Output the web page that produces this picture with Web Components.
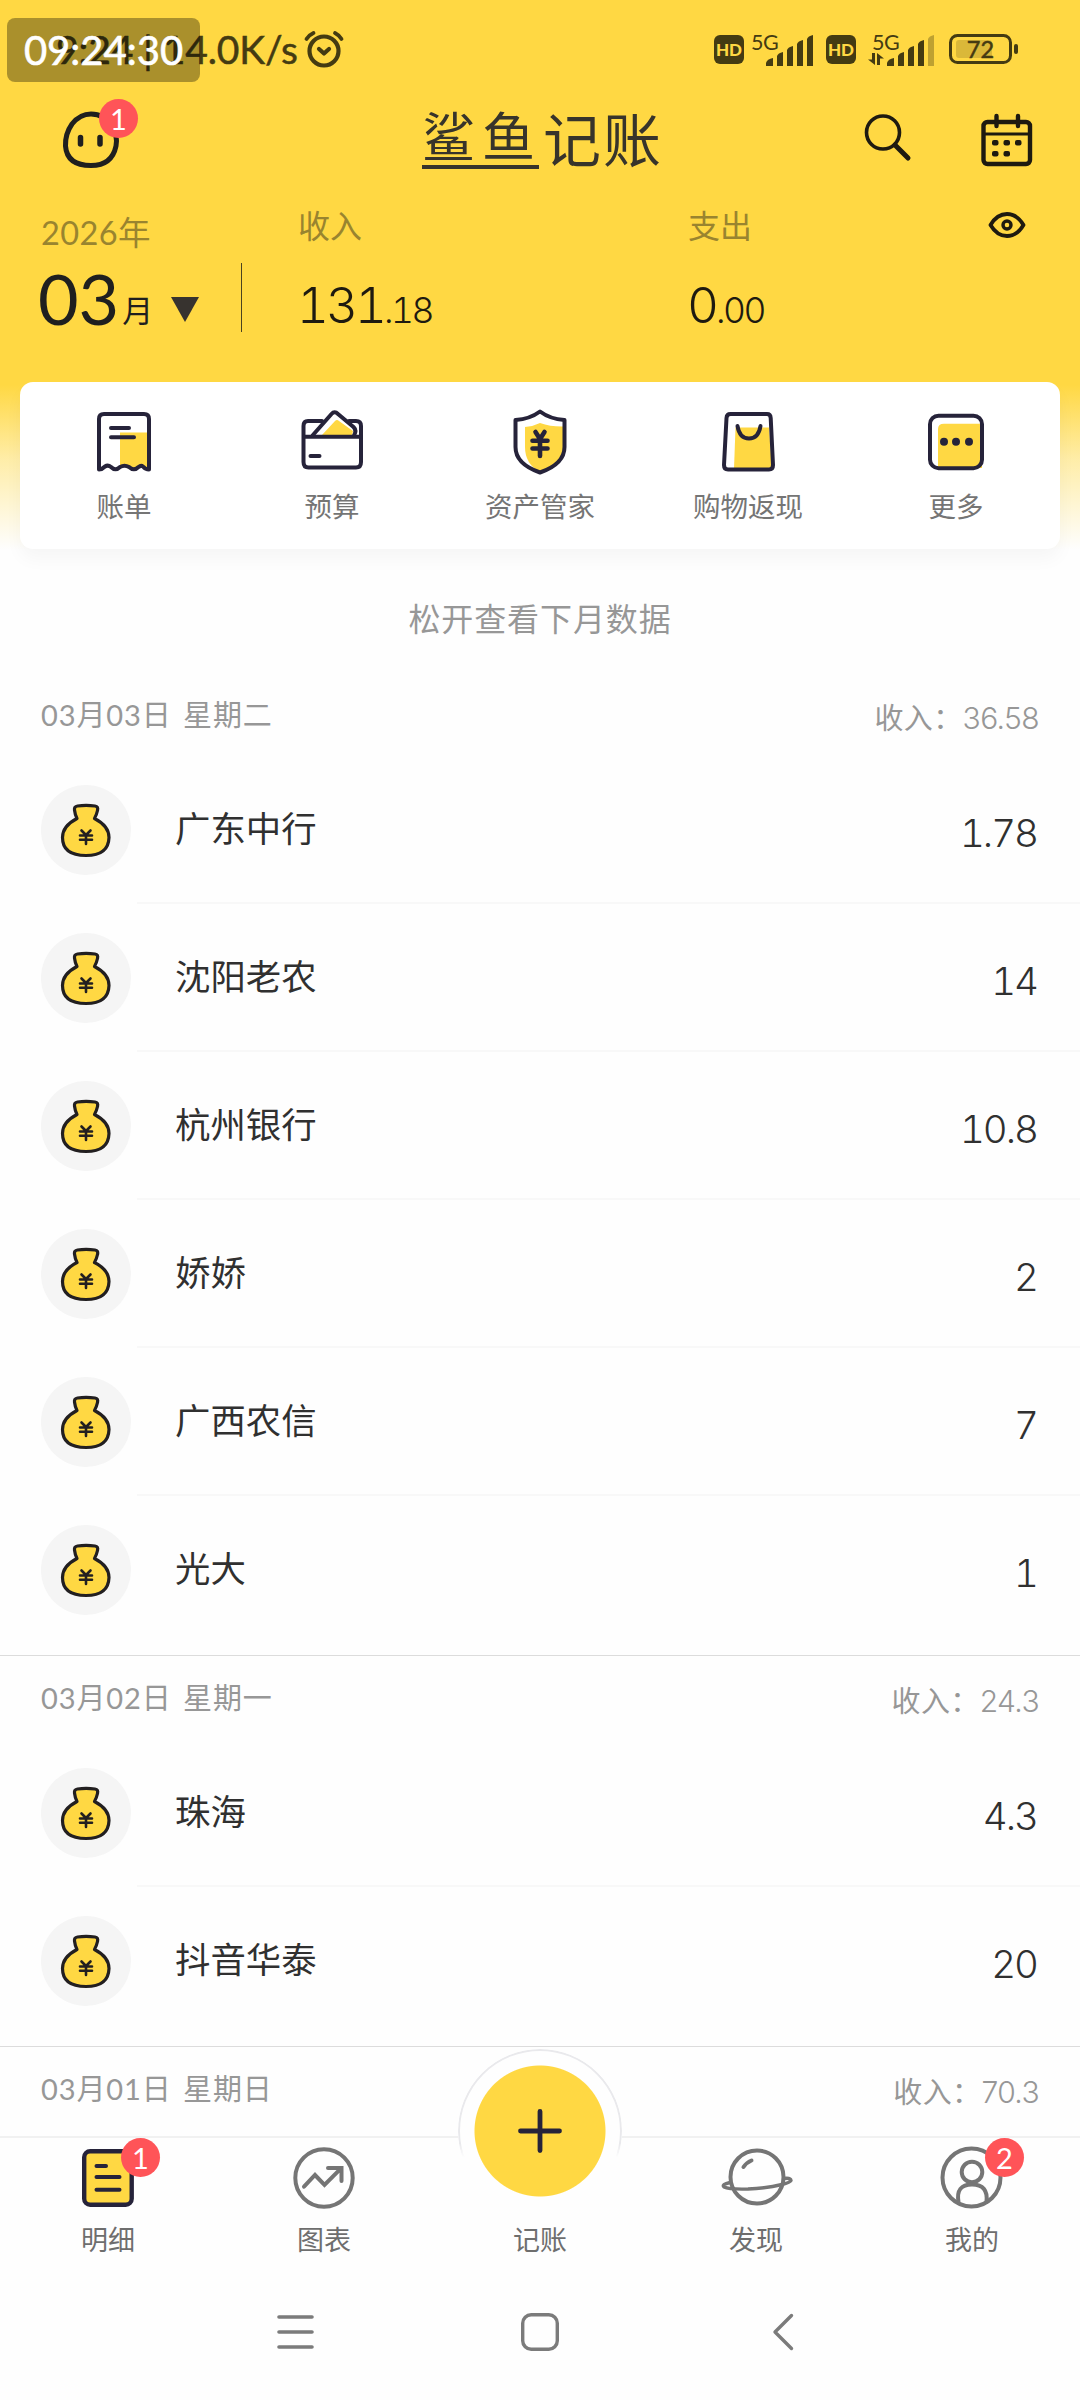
<!DOCTYPE html>
<html lang="zh-CN">
<head>
<meta charset="utf-8">
<title>鲨鱼记账</title>
<style>
html,body{margin:0;padding:0;background:#fefefe}
body{width:1080px;height:2400px;overflow:hidden;font-family:Lato,"Noto Sans CJK SC",sans-serif;color:#222}
</style>
</head>
<body>
<ledger-app></ledger-app>
<script>
const define = (name, css, html) => {
  customElements.define(name, class extends HTMLElement {
    constructor() {
      super();
      const t = document.createElement('template');
      t.innerHTML = '<style>*{box-sizing:border-box}' + css + '</style>' + (typeof html === 'function' ? html(this) : html);
      this.attachShadow({mode: 'open'}).appendChild(t.content.cloneNode(true));
    }
  });
};

const ink = 'fill="none" stroke="#26233a" stroke-width="4" stroke-linecap="round" stroke-linejoin="round"';
const gray = 'fill="none" stroke="#757575" stroke-width="4" stroke-linecap="round" stroke-linejoin="round"';
const dark = 'fill="none" stroke="#1e1a10" stroke-width="4.4" stroke-linecap="round" stroke-linejoin="round"';
const signal = last => '<g fill="#443b12"><path d="M0 31V28Q1 24 7 23V31z"/><path d="M11 31V21Q12 18 17 17V31z"/><path d="M21 31V15Q22 12 27 11V31z"/><path d="M31 31V9Q32 6 37 5V31z"/><path opacity="' + last + '" d="M41 31V4Q42 1 47 0V31z"/></g>';
const ICONS = {
  alarm: [40, 36, '<g fill="none" stroke="#443b12" stroke-width="4.200" stroke-linecap="round"><circle cx="20" cy="20" r="14.5"/><path d="M2.5 8Q5 4 9.500 2M31 2Q35 4 37.500 8" stroke-width="3.800"/><path d="M15 18L20 22.500L25 18" stroke-linejoin="round"/></g>'],
  signal: [48, 31, signal(1)],
  signalWeak: [48, 31, signal(.35)],
  updown: [16, 12, '<g fill="#443b12"><path d="M4 0H7V12L0 6.500H4z"/><path d="M9 12H12V5.500H16L9 0z"/></g>'],
  battery: [70, 30, '<rect x="1.500" y="1.500" width="60" height="27" rx="7" fill="none" stroke="#443b12" stroke-width="3"/><rect x="7" y="6" width="36" height="18" rx="3" fill="#443b12" opacity=".2"/><rect x="65" y="10" width="4" height="10" rx="2" fill="#443b12"/>'],
  face: [58, 58, '<g fill="none" stroke="#1f1f1f"><path d="M29 3Q42 3 50 15Q56 25 54 35Q50 54.500 29 54.500Q5 54.500 3.500 35Q3 23 10 13Q18 3 29 3z" stroke-width="5"/><path d="M18.500 26.500V33M38 26.500V33" stroke-width="5.500" stroke-linecap="round"/></g>'],
  search: [48, 48, '<g ' + dark + '><circle cx="19" cy="18.500" r="16.500" stroke-width="3.600"/><path d="M31 31L44 44" stroke-width="5"/></g>'],
  calendar: [52, 52, '<g ' + dark + '><rect x="2.500" y="8" width="46.500" height="42" rx="4"/><path d="M3 20H49" stroke-width="3"/><path d="M15.500 2V12M37 2V12"/></g><g fill="#1e1a10"><rect x="11" y="26" width="6.500" height="5.500" rx="2"/><rect x="22.500" y="26" width="6.500" height="5.500" rx="2"/><rect x="34" y="26" width="6.500" height="5.500" rx="2"/><rect x="11" y="37" width="6.500" height="5.500" rx="2"/><rect x="22.500" y="37" width="6.500" height="5.500" rx="2"/></g>'],
  eye: [38, 28, '<g fill="none" stroke="#1e1a10" stroke-linejoin="round"><path d="M2.500 14Q9 3 19 3T35.500 14Q29 25 19 25T2.500 14z" stroke-width="3.800"/><circle cx="19" cy="14" r="4" stroke-width="3.400"/></g>'],
  receipt: [64, 64, '<path d="M28 23.500H57V60L50 57L42 60L34 57L28 58z" fill="#ffd843"/><g ' + ink + '><path d="M7 60.500V10Q7 5 12 5H52Q57 5 57 10V60.500Q53.500 60.500 51 57.500Q49 56 46.500 58Q42 62.500 37 58Q32.500 55.500 28 58Q23.500 62.500 19 58Q16 55.500 13 57.500Q10 60.500 7 60.500z"/><path d="M19 19H37M19 28.300H42"/></g>'],
  wallet: [64, 64, '<path d="M22 26L35 12Q37 10 39 12L53 22L52 26z" fill="#ffd843"/><g ' + ink + '><path d="M22 12H8Q3.500 12 3.500 17V53Q3.500 58.500 8.500 58.500H56Q61 58.500 61 53V17Q61 12 56 12H49"/><path d="M4 27.700H61M10.500 47H19.500"/><path d="M12.500 26.500L31.500 5Q34.500 1.500 38 5L53.500 18Q57 21.500 54 26.500"/></g>'],
  shield: [64, 64, '<path d="M17 18Q25 17.500 32 14Q43 18 57 17.500V38Q56 56 32 63Q17 55 17 38z" fill="#ffd843"/><g ' + ink + '><path d="M7.500 11Q22 10 32 2.500Q42 10 56.500 11V38Q56.500 55 32 63.500Q7.500 55 7.500 38z"/><path d="M27.500 23L32 30L36.500 23M24.500 31.700H39.500M24.500 39.500H39.500M32 31V47" stroke-width="4.600"/></g>'],
  shop: [64, 64, '<path d="M19.500 18.500H53L56 60H18z" fill="#ffd843"/><g ' + ink + '><path d="M14.500 5H51Q54.500 5 54.700 9L57 56Q57 60.500 53 60.500H12Q8 60.500 8 56L10.500 9Q10.700 5 14.500 5z"/><path d="M21.500 17Q23.500 29.500 33 29.500T44.500 17"/></g>'],
  more: [64, 64, '<path d="M14 60V20Q14 14.700 20 14.700H58V59z" fill="#ffd843"/><rect x="6" y="6.700" width="52" height="52.500" rx="8.500" ' + ink + '/><g fill="#26233a"><circle cx="20" cy="32.700" r="4"/><circle cx="32" cy="32.700" r="4"/><circle cx="45" cy="32.700" r="4"/></g>'],
  money: [90, 90, '<g stroke="#221f20" stroke-linejoin="round" stroke-linecap="round"><path d="M33.500 25Q33 21.500 36.500 21Q45 19.600 54 21Q57.500 21.500 56.500 25.500Q55.500 30 53.500 33.500Q68 41 68 52.500Q67.500 70.500 45 70.500Q21.500 70.500 21.500 52.500Q21.500 41 36 33.500Q34 29.500 33.500 25z" fill="#ffd843" stroke-width="3.200"/><path d="M40.500 45.500L45 50L49.500 45.500M39 50.500H51M39 54.800H51M45 50V59" fill="none" stroke-width="2.600"/></g>'],
  bills: [64, 64, '<rect x="8.200" y="5.200" width="47.500" height="53.500" rx="6" fill="#ffd843" stroke="#26233a" stroke-width="4.400"/><path d="M20.500 20H30M20.500 31H43.500M20.500 43.700H43.500" ' + ink + '/>'],
  chart: [64, 64, '<g ' + gray + '><circle cx="32" cy="32" r="28.700"/><path d="M12 40.700L23 29L32.500 39L49 22.300M36 22H49.500V35" stroke-linejoin="miter"/></g>'],
  planet: [64, 64, '<g ' + gray + '><circle cx="33" cy="31" r="26.500"/><path d="M19.500 21Q22.500 16.500 27.500 14.500"/><path d="M6 36.500Q-3 38.500 0 41Q5 43.500 24 43Q44 42 58 38.500Q66 36.500 67 34.500Q66.500 31.500 60 32.500" stroke-width="3.400"/></g>'],
  user: [64, 64, '<g ' + gray + '><circle cx="31.500" cy="31.500" r="29"/><circle cx="32" cy="26" r="10.300"/><path d="M18.500 56Q15.500 38.500 32 38.500T46.500 56"/></g>'],
  plus: [44, 44, '<path d="M22 2.500V41.500M2.500 22H41.500" fill="none" stroke="#26233a" stroke-width="4.800" stroke-linecap="round"/>'],
  menu: [40, 40, '<path d="M4 5H37M4 20H37M4 35H37" fill="none" stroke="#7b7b7b" stroke-width="3.600" stroke-linecap="round"/>'],
  home: [40, 40, '<rect x="2.700" y="2.700" width="34.600" height="34.600" rx="8.500" fill="none" stroke="#7b7b7b" stroke-width="3.400"/>'],
  back: [40, 40, '<path d="M26.500 3.500L10 20L26.500 36.500" fill="none" stroke="#7b7b7b" stroke-width="3.400" stroke-linecap="round" stroke-linejoin="round"/>']
};
define('ui-icon', ':host{display:block;flex:none}svg{display:block;overflow:visible}', el => {
  const [w, h, body] = ICONS[el.getAttribute('name')];
  return `<svg width="${w}" height="${h}" viewBox="0 0 ${w} ${h}">${body}</svg>`;
});

define('count-badge', ':host{position:absolute;width:39px;height:39px;border-radius:50%;background:#ff5458;color:#fff;font-size:29px;line-height:39px;text-align:center}', '<slot></slot>');

define('status-bar', `
:host{display:flex;position:relative;height:96px;padding:2px 61px 0 56px;align-items:center;justify-content:space-between;color:#443b12}
.l,.r{display:flex;align-items:center}
.t{font-size:39px;line-height:60px;white-space:pre;width:243px;letter-spacing:-.1px;-webkit-text-stroke:.5px #443b12}
.hd{width:30px;height:29px;border-radius:6px;background:#443b12;color:#ffd843;font:900 17px/29px Lato,sans-serif;text-align:center}
.net{position:relative;height:34px;display:flex;align-items:flex-end}
.g{font-size:21.500px;line-height:20px;letter-spacing:-.5px}
.n1{width:70px;margin-left:7px}.n2{width:68px;margin-left:12px}
.n1 .g{align-self:flex-start;width:15px}.n2 .g{position:absolute;left:4px;top:0}
.n1,.n2{margin-top:-1px}
.n2 .u{margin-right:3px;margin-bottom:1px}
.b{position:relative;margin-left:13px}
.b span{position:absolute;left:0;top:0;width:63px;text-align:center;font-size:23.500px;line-height:30px;-webkit-text-stroke:.5px #443b12}
.clock{position:absolute;left:7px;top:18px;width:193px;height:64px;border-radius:8px;background:rgba(0,0,0,.335);color:#fff;font-size:40px;line-height:65px;text-align:center;-webkit-text-stroke:.6px #fff}`,
`<div class="l"><span class="t">9:24 | 14.0K/s</span><ui-icon name="alarm" style="margin-left:5px"></ui-icon></div>
<div class="r"><span class="hd">HD</span>
<div class="net n1"><span class="g">5G</span><ui-icon name="signal"></ui-icon></div>
<span class="hd" style="margin-left:5px">HD</span>
<div class="net n2"><span class="g">5G</span><ui-icon class="u" name="updown"></ui-icon><ui-icon name="signalWeak"></ui-icon></div>
<div class="b"><ui-icon name="battery"></ui-icon><span>72</span></div></div>
<div class="clock">09:24:30</div>`);

define('title-bar', `
:host{display:flex;height:88px;align-items:center;padding:0 47px 1px 62px;color:#37342b}
.a{position:relative;width:180px}count-badge{left:37px;top:-12px}
h1{flex:1;margin:0;display:flex;align-items:flex-start;justify-content:center;font-weight:400;font-size:58px;line-height:58px;height:58px;letter-spacing:2px;white-space:nowrap;padding-right:10px}
.u{font-size:53px;line-height:51px;height:58px;border-bottom:4px solid #37342b;letter-spacing:7px;width:117px;margin-right:4px}
.r{width:180px;display:flex;justify-content:flex-end;gap:69px;align-items:center}.r :first-child{margin-bottom:4px}`,
`<div class="a"><ui-icon name="face"></ui-icon><count-badge>1</count-badge></div>
<h1><span class="u">鲨鱼</span><span>记账</span></h1>
<div class="r"><ui-icon name="search"></ui-icon><ui-icon name="calendar"></ui-icon></div>`);

define('money-total', `
:host{display:block;color:#1e1a10}
.k{font-size:32px;line-height:42px;color:#99842f;margin-left:-1px}
.v{font-family:Inter,sans-serif;font-variant-numeric:tabular-nums;font-weight:300;font-size:49.500px;line-height:60px;margin-top:28px;margin-left:-2px;letter-spacing:-3px}
small{font-size:35.500px;letter-spacing:-2.500px}`,
'<div class="k"><slot name="label"></slot></div><div class="v"><slot></slot><small><slot name="cents"></slot></small></div>');

define('month-summary', `
:host{display:flex;height:198px;padding:0 54px 0 39px;align-items:flex-start}
.m{width:202px}
.y{font-size:32.500px;line-height:42px;color:#99842f;margin:28px 0 0 2px;letter-spacing:.4px}
.d{display:flex;align-items:baseline;font-size:70px;line-height:84px;height:84px;margin:2px 0 0 -1px;color:#1f1f1f}
.d span{font-size:31px;margin-left:3px;position:relative;top:-3px}
i{border:14px solid transparent;border-top:25px solid #37332f;border-bottom:0;margin-left:18px;align-self:center;margin-top:22px}
hr{border:0;margin:79px 56px 0 0;width:1px;height:69px;background:#4b421f}
money-total{margin-top:21px}
.in{width:390px;margin-left:1px}ui-icon{margin:27px 0 0 auto}`,
`<div class="m"><div class="y">2026年</div><div class="d">03<span>月</span><i></i></div></div><hr>
<money-total class="in"><span slot="label">收入</span>131<span slot="cents">.18</span></money-total>
<money-total><span slot="label">支出</span>0<span slot="cents">.00</span></money-total><ui-icon name="eye"></ui-icon>`);

define('quick-item', ':host{flex:1;display:flex;flex-direction:column;align-items:center;font-size:27.500px;line-height:36px;color:#757575}span{margin-top:16px}', el => `<ui-icon name="${el.getAttribute('icon')}"></ui-icon><span><slot></slot></span>`);
define('quick-card', ':host{display:flex;height:167px;margin:0 20px;padding-top:27px;background:#fff;border-radius:13px;box-shadow:0 10px 18px rgba(0,0,0,.035)}',
`<quick-item icon="receipt">账单</quick-item><quick-item icon="wallet">预算</quick-item><quick-item icon="shield">资产管家</quick-item><quick-item icon="shop">购物返现</quick-item><quick-item icon="more">更多</quick-item>`);

define('ledger-row', `
:host{display:flex;height:148px;align-items:center;padding:0 41px 0 41px;color:#303030;background:linear-gradient(#f8f8f8,#f8f8f8) 137px 146px/100% 2px no-repeat}
:host(:last-of-type){background:none}
.c{width:90px;height:90px;border-radius:50%;background:#f5f5f5;margin-right:44px;margin-top:-1px}
.n{flex:1;font-size:35.400px;line-height:50px;margin-top:-2px}
.v{font-family:Inter,sans-serif;font-variant-numeric:tabular-nums;font-weight:300;font-size:38.500px;line-height:50px;margin-top:5px;letter-spacing:-2px;margin-right:2px}`,
el => `<div class="c"><ui-icon name="money"></ui-icon></div><span class="n"><slot></slot></span><span class="v">${el.getAttribute('amount')}</span>`);

define('day-group', `
:host{display:block;padding-bottom:11px}
:host([divided]) header{border-top:1px solid #dcdcdc}
header{display:flex;justify-content:space-between;height:84px;padding:0 41px;font-size:29px;line-height:86px;color:#979797}
:host([divided]) header{line-height:83px}
.d{letter-spacing:.9px;word-spacing:3px}
.s{padding-top:3px;letter-spacing:.4px}b{font:300 30px Inter,sans-serif;letter-spacing:-.6px}`,
el => `<header><span class="d">${el.getAttribute('date')}</span><span class="s">收入：<b>${el.getAttribute('sum')}</b></span></header><slot></slot>`);

define('tab-item', `
:host{position:relative;flex:1;display:flex;flex-direction:column;align-items:center;font-size:27px;line-height:36px;color:#6e6e6e;padding-top:8px}
span{margin-top:12px}count-badge{left:121px;top:0}
.fab{position:absolute;left:26px;top:-89px;width:164px;height:164px;border-radius:50%;background:radial-gradient(circle,#ffd843 65px,#fefefe 66px);display:flex;align-items:center;justify-content:center}
.fab::before{content:"";position:absolute;inset:0;border:2px solid #e9e9ec;border-radius:50%;-webkit-mask:linear-gradient(#000 58%,transparent 66%);mask:linear-gradient(#000 58%,transparent 66%)}
.sp{height:64px}`,
el => {
  const n = el.getAttribute('icon'), b = el.getAttribute('badge');
  return (n === 'plus' ? '<div class="fab"><ui-icon name="plus"></ui-icon></div><div class="sp"></div>' : `<ui-icon name="${n}"></ui-icon>`)
    + '<span><slot></slot></span>' + (b ? `<count-badge>${b}</count-badge>` : '');
});
define('tab-bar', ':host{position:relative;display:flex;flex:none;height:134px;background:#fefefe;border-top:2px solid #f1f1f1;box-sizing:border-box}',
`<tab-item icon="bills" badge="1">明细</tab-item><tab-item icon="chart">图表</tab-item><tab-item icon="plus">记账</tab-item><tab-item icon="planet">发现</tab-item><tab-item icon="user" badge="2">我的</tab-item>`);

define('system-nav', ':host{display:flex;flex:none;height:130px;background:#fefefe;box-sizing:border-box;padding:42px 275px 0;justify-content:space-between}',
'<ui-icon name="menu"></ui-icon><ui-icon name="home"></ui-icon><ui-icon name="back"></ui-icon>');

define('ledger-app', `
:host{display:flex;flex-direction:column;width:1080px;height:2400px;overflow:hidden;background:linear-gradient(#ffd843 385px,#ffe27099 460px,#fff0 550px),#fefefe}
main{flex:1;min-height:0;overflow:hidden}
.hint{height:123px;padding-top:46px;text-align:center;font-size:32px;line-height:48px;letter-spacing:.9px;color:#979797}`,
`<status-bar></status-bar><title-bar></title-bar><month-summary></month-summary>
<main><quick-card></quick-card><div class="hint">松开查看下月数据</div>
<day-group date="03月03日 星期二" sum="36.58">
<ledger-row amount="1.78">广东中行</ledger-row><ledger-row amount="14">沈阳老农</ledger-row><ledger-row amount="10.8">杭州银行</ledger-row><ledger-row amount="2">娇娇</ledger-row><ledger-row amount="7">广西农信</ledger-row><ledger-row amount="1">光大</ledger-row></day-group>
<day-group divided date="03月02日 星期一" sum="24.3">
<ledger-row amount="4.3">珠海</ledger-row><ledger-row amount="20">抖音华泰</ledger-row></day-group>
<day-group divided date="03月01日 星期日" sum="70.3"></day-group></main>
<tab-bar></tab-bar><system-nav></system-nav>`);
</script>
</body>
</html>
